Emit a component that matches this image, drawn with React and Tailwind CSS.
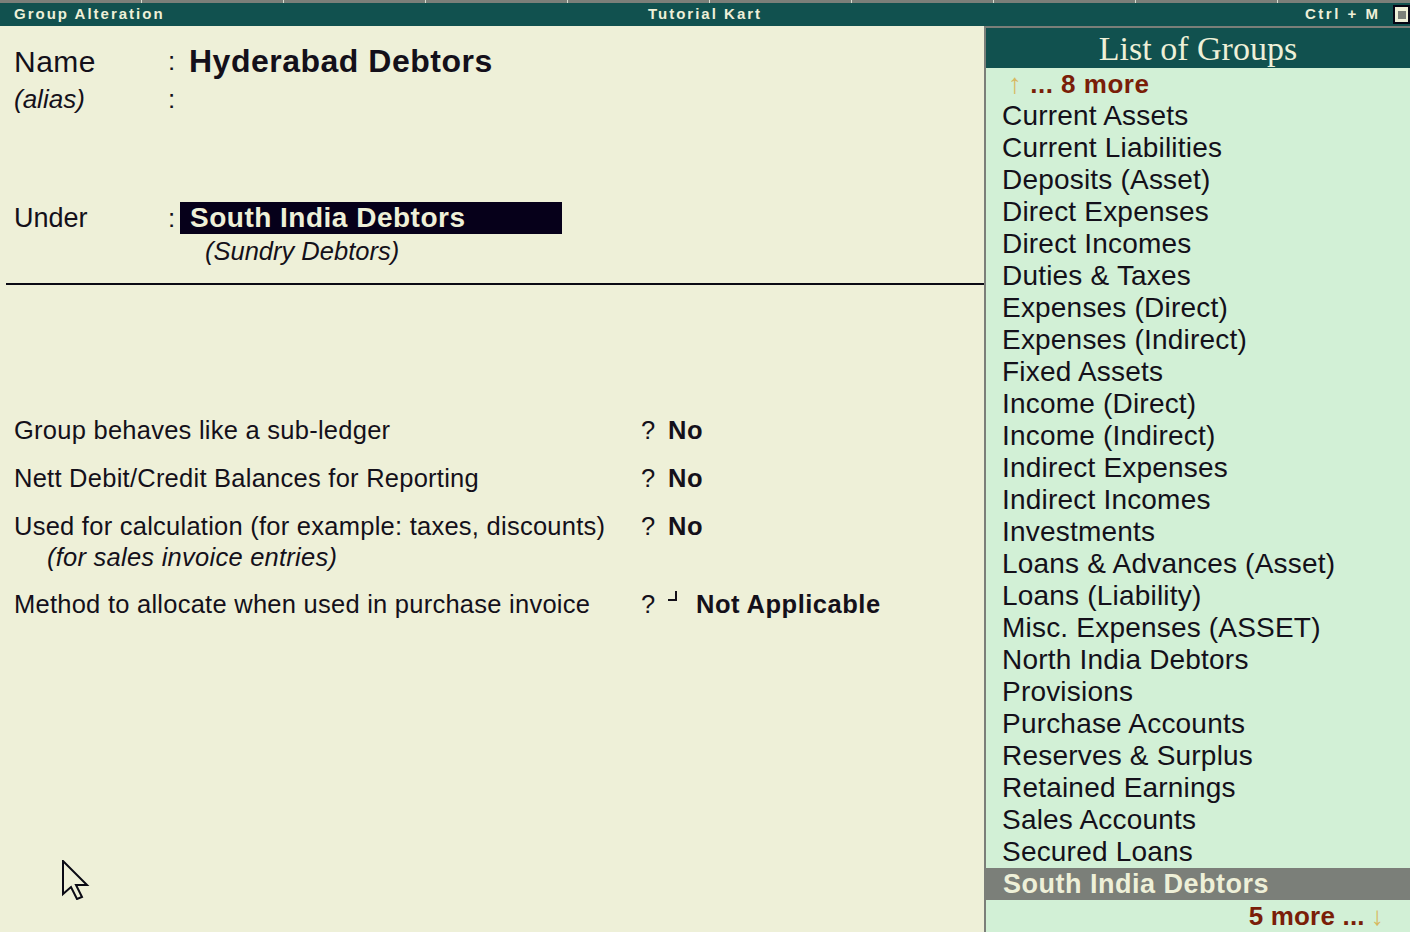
import React from "react";

const groups = [
  "Current Assets",
  "Current Liabilities",
  "Deposits (Asset)",
  "Direct Expenses",
  "Direct Incomes",
  "Duties & Taxes",
  "Expenses (Direct)",
  "Expenses (Indirect)",
  "Fixed Assets",
  "Income (Direct)",
  "Income (Indirect)",
  "Indirect Expenses",
  "Indirect Incomes",
  "Investments",
  "Loans & Advances (Asset)",
  "Loans (Liability)",
  "Misc. Expenses (ASSET)",
  "North India Debtors",
  "Provisions",
  "Purchase Accounts",
  "Reserves & Surplus",
  "Retained Earnings",
  "Sales Accounts",
  "Secured Loans",
];

const options = [
  { label: "Group behaves like a sub-ledger", value: "No" },
  { label: "Nett Debit/Credit Balances for Reporting", value: "No" },
  {
    label: "Used for calculation (for example: taxes, discounts)",
    value: "No",
    sub: "(for sales invoice entries)",
  },
  { label: "Method to allocate when used in purchase invoice", value: "Not Applicable", corner: true },
];

function TopBar() {
  return (
    <div className="flex flex-col">
      {/* thin strip with tick marks */}
      <div className="h-[3px] bg-[#7b7f79] flex">
        {Array.from({ length: 10 }).map((_, i) => (
          <div key={i} className="w-[142px] h-[3px] border-r border-[#d8dccf] shrink-0" />
        ))}
      </div>
      <div className="h-[23px] bg-[#11514f] flex items-center text-[#eef0d8] font-bold text-[15px] tracking-[2px] pl-[14px]">
        <span className="w-[634px]">Group Alteration</span>
        <span className="w-[657px]">Tutorial Kart</span>
        <span className="tracking-[2.5px]">Ctrl + M</span>
        <span className="ml-auto w-[17px] h-[19px] border-2 border-[#050514] bg-[#eef0d8] flex items-center pl-[3px]">
          <span className="w-[8px] h-[8px] bg-[#7b7f79]" />
        </span>
      </div>
    </div>
  );
}

function Cursor() {
  return (
    <svg className="absolute left-[62px] top-[834px]" width="28" height="40" viewBox="0 0 28 40">
      <path
        d="M1 1 L1 34 L9 27 L15 39 L20 37 L14 25 L25 25 Z"
        fill="#eef0d8"
        stroke="#0a0a14"
        strokeWidth="2"
        strokeLinejoin="miter"
      />
    </svg>
  );
}

function LeftPanel() {
  return (
    <div className="relative w-[984px] bg-[#eef0d8] text-[#14101a] pt-[15px]">
      <div className="flex items-center h-[40px] pl-[14px]">
        <span className="w-[154px] text-[30px] tracking-[0.5px]">Name</span>
        <span className="text-[26px] w-[21px]">:</span>
        <span className="text-[32px] font-bold tracking-[0.5px]">Hyderabad Debtors</span>
      </div>
      <div className="flex items-center h-[36px] pl-[14px]">
        <span className="w-[154px] text-[26px] italic">(alias)</span>
        <span className="text-[26px]">:</span>
      </div>
      <div className="flex items-center h-[32px] pl-[14px] mt-[85px]">
        <span className="w-[154px] text-[27px]">Under</span>
        <span className="text-[26px] w-[12px]">:</span>
        <span className="w-[382px] h-[32px] bg-[#06001a] text-[#eef0d8] text-[28px] font-bold tracking-[0.5px] pl-[10px] flex items-center">
          South India Debtors
        </span>
      </div>
      <div className="h-[34px] pl-[205px] text-[25.5px] italic flex items-center">(Sundry Debtors)</div>
      <div className="mt-[15px] ml-[6px] h-[2px] bg-[#0a0a14]" />

      <div className="mt-[128px] pl-[14px] flex flex-col text-[25.5px] tracking-[0.25px]">
        {options.map((o) => (
          <div key={o.label} className="mb-[14px]">
            <div className="flex items-center h-[34px]">
              <span className="w-[627px] whitespace-nowrap">{o.label}</span>
              <span className="w-[27px]">?</span>
              {o.corner && (
                <span className="w-[28px] h-[30px] flex items-start pt-[2px]">
                  <span className="w-[9px] h-[10px] border-r-2 border-b-2 border-[#14101a]" />
                </span>
              )}
              <span className="font-bold tracking-[0.5px]">{o.value}</span>
            </div>
            {o.sub && <div className="pl-[33px] italic h-[32px] -mt-[2px] flex items-center">{o.sub}</div>}
          </div>
        ))}
      </div>
      <Cursor />
    </div>
  );
}

function RightPanel() {
  return (
    <div className="w-[426px] flex border-l-2 border-[#7b7f79]">
      <div className="flex-1 flex flex-col">
        <div className="h-[2px] bg-[#7b7f79]" />
        <div
          className="h-[40px] bg-[#11514f] text-[#eef0d8] text-[34px] flex items-center justify-center"
          style={{ fontFamily: '"Liberation Serif", serif' }}
        >
          List of Groups
        </div>
        <div className="flex-1 bg-[#d2f0d6] flex flex-col text-[28px] tracking-[0.2px] text-[#14101a]">
          <div className="h-[32px] flex items-center pl-[22px] font-bold text-[#7a1e08]">
            <span className="text-[#d8b860] font-normal mr-[8px]">↑</span>
            <span className="font-bold text-[26px] tracking-[0.5px]">... 8 more</span>
          </div>
          {groups.map((g) => (
            <div key={g} className="h-[32px] flex items-center pl-[16px] whitespace-nowrap">
              {g}
            </div>
          ))}
          <div className="h-[32px] flex items-center pl-[17px] bg-[#7b7f79] text-[#eef0d8] font-bold text-[27px] tracking-[0.5px]">
            South India Debtors
          </div>
          <div className="h-[32px] flex items-center justify-end pr-[26px] text-[#7a1e08] text-[26px]">
            <span className="font-bold">5 more ...</span>
            <span className="text-[#d8b860] ml-[6px]">↓</span>
          </div>
        </div>
      </div>
    </div>
  );
}

export default function App() {
  return (
    <div
      className="w-[1410px] h-[932px] overflow-hidden flex flex-col bg-[#eef0d8]"
      style={{ fontFamily: '"Liberation Sans", Arial, sans-serif' }}
    >
      <TopBar />
      <div className="flex flex-1">
        <LeftPanel />
        <RightPanel />
      </div>
    </div>
  );
}
